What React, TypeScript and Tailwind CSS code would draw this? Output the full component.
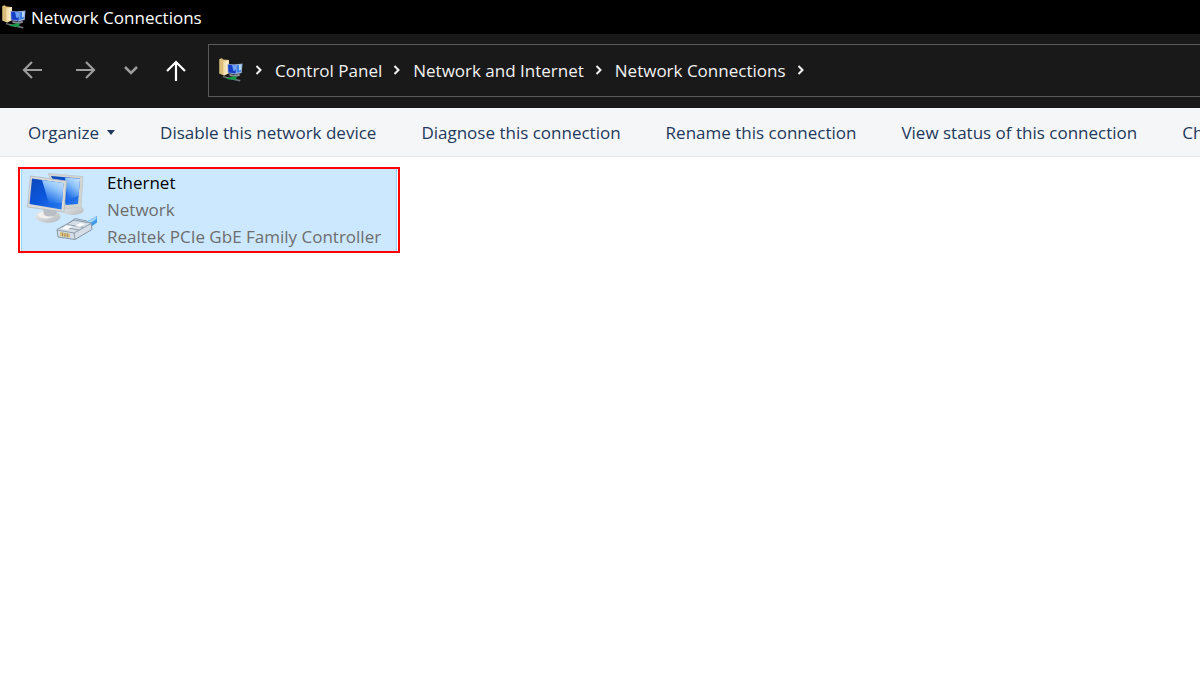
const crumbs = ['Control Panel', 'Network and Internet', 'Network Connections']

const commands = [
    'Disable this network device',
    'Diagnose this connection',
    'Rename this connection',
    'View status of this connection',
    'Change settings of this connection',
]

const FolderNetworkIcon = () => {
    return (
        <svg width="24" height="24" viewBox="0 0 24 24" className="shrink-0" aria-hidden="true">
            <path d="M.5 1 3 .3l1 1.2L10 2v13l-4.500 2.500L.5 15.500z" fill="#e2c67e" />
            <path d="M.5 1 4 2.500v14.500L.5 15.500z" fill="#d9bd7a" />
            <path d="M4.500 3.500 10 2v13l-5.500 2.500z" fill="#f3e3b4" />
            <path d="M8 3v12" stroke="#fff4d2" strokeWidth="1.200" />
            <path d="m16 6.500 7.500-1-.8 9.500-6.700 1.500z" fill="#9fb4d6" />
            <path d="m16.500 7.500 6-.8-.6 7-5.400 1.200z" fill="#3d7fe4" />
            <path d="m20 7 2.500-.3-.4 5L20 12.500z" fill="#b5d6fb" />
            <path d="m8.500 6 9.500.5-.8 10L8.800 15.200z" fill="#8fa9dc" />
            <path d="m9.200 6.800 8 .5-.6 8.200-7.200-1.100z" fill="#173fc6" />
            <path d="m13 7 4.200.3-.4 5-2.300.7z" fill="#6ea4f4" />
            <path d="m10.500 16 5.500.9 4.500-1.200.5 2-4.500 1.300-6-1z" fill="#8b9099" />
            <path d="m4 18 8 1.800 9.500 2.200-.6 1.600-9-2.200-8-2.100z" fill="#6f767d" />
            <path d="m7.500 20.300 9-2.300 1.300 1.500L16.500 22l-8-.7z" fill="#149a47" />
        </svg>
    )
}

const EthernetIcon = () => {
    return (
        <svg width="72" height="72" viewBox="0 0 72 72" className="shrink-0" aria-hidden="true">
            <defs>
                <linearGradient id="screen" x1="0" y1="0" x2="1" y2="1">
                    <stop offset="0" stopColor="#0d47b8" />
                    <stop offset="0.5" stopColor="#0b56dd" />
                    <stop offset="1" stopColor="#2a7cee" />
                </linearGradient>
                <linearGradient id="glare" x1="1" y1="0" x2="0.500" y2="1">
                    <stop offset="0" stopColor="#d4ebff" />
                    <stop offset="0.450" stopColor="#8fc3fb" />
                    <stop offset="1" stopColor="#1f6fe8" />
                </linearGradient>
                <linearGradient id="stand" x1="0" y1="0" x2="1" y2="1">
                    <stop offset="0" stopColor="#efefec" />
                    <stop offset="1" stopColor="#b2b8be" />
                </linearGradient>
            </defs>
            <ellipse cx="46" cy="37" rx="11" ry="5" fill="url(#stand)" />
            <path d="m21 .5 35 3-2 30.500-16 2z" fill="#d3d3cf" stroke="#bfc6cc" strokeWidth=".8" />
            <path d="m24 3 29 2.500-2 25.500-12 1z" fill="url(#screen)" />
            <path d="m38 4.500 15 1.200-1.500 17L40 27z" fill="url(#glare)" />
            <ellipse cx="21" cy="43.500" rx="12.500" ry="6.500" fill="url(#stand)" />
            <ellipse cx="19" cy="42" rx="8" ry="3.500" fill="#f1f1ee" />
            <path d="m16 35 14 3-1 4q-6 3-12 0z" fill="#b9bfc5" />
            <path d="m3.500 3 36 5L37 39 .5 34z" fill="#dadad6" stroke="#b3b9bf" strokeWidth=".8" />
            <path d="m5 5.500 31.500 4.500L34.500 36.500 2.500 31z" fill="url(#screen)" />
            <path d="m15 7 21.500 3-1.500 20-13 .5z" fill="url(#glare)" />
            <path d="m57 50 13-7v6.500L61 56z" fill="#3f9be8" />
            <path d="m58 49.500 11.500-6v2.500l-9 6z" fill="#9dd4fa" />
            <path d="m30 56.500 17-9.500 17 3 1 6.500L48 66.500 31 64z" fill="#d5dee6" stroke="#8795a5" />
            <path d="m30 57 17 3 17-9.500M47 60l1 6M35 54l17 3M40 51.500l17 3M42 50l6-4.500 12 2.500" fill="none" stroke="#8f9cab" />
            <path d="m34 55.500 6-3.300 6 1-6 3.500zM48 53l5-3 5 1-5 3z" fill="#f6fafd" />
            <path d="m33 59 10 2v3.500L33 63z" fill="#d8bd7c" />
            <path d="M35.500 59.500v4M38 60v4M40.500 60.500v4" stroke="#9d8a58" strokeWidth=".8" />
        </svg>
    )
}

const Chevron = () => {
    return (
        <svg width="8" height="12" viewBox="0 0 8 12" fill="none" stroke="#f2f2f2" strokeWidth="2" className="shrink-0" aria-hidden="true">
            <path d="m1.500 2 4 4-4 4" />
        </svg>
    )
}

const App = () => {
    return (
        <div className="min-h-screen overflow-hidden bg-white font-['Open_Sans','Noto_Sans',sans-serif] text-[17px] leading-[27px]">
            <header className="flex h-[34px] items-center gap-[5px] bg-black pl-0.5 text-white">
                <FolderNetworkIcon />
                <h1>Network Connections</h1>
            </header>

            <nav className="flex h-[74px] items-center bg-[#191919] pb-0.5">
                <div className="flex w-[208px] shrink-0 items-center pl-[22px]">
                    <button type="button" aria-label="Back" className="mr-8">
                        <svg width="21" height="20" viewBox="0 0 21 20" fill="none" stroke="#9d9d9d" strokeWidth="2.200">
                            <path d="M20 10H2M10 2l-8 8 8 8" />
                        </svg>
                    </button>
                    <button type="button" aria-label="Forward" className="mr-7">
                        <svg width="21" height="20" viewBox="0 0 21 20" fill="none" stroke="#9d9d9d" strokeWidth="2.200">
                            <path d="M1 10h18M11 2l8 8-8 8" />
                        </svg>
                    </button>
                    <button type="button" aria-label="Recent locations" className="mr-7">
                        <svg width="14" height="10" viewBox="0 0 14 10" fill="none" stroke="#9d9d9d" strokeWidth="2.500">
                            <path d="m1 2 6 6 6-6" />
                        </svg>
                    </button>
                    <button type="button" aria-label="Up">
                        <svg width="20" height="22" viewBox="0 0 20 22" fill="none" stroke="#ffffff" strokeWidth="2.200">
                            <path d="M10 22V3M1 12l9-9 9 9" />
                        </svg>
                    </button>
                </div>
                <div className="flex h-[53px] min-w-0 flex-1 items-center overflow-hidden border border-r-0 border-[#5a5a5a] pl-2.5 whitespace-nowrap text-[#f2f2f2]">
                    <FolderNetworkIcon />
                    <ol className="flex items-center">
                        <li className="flex px-3"><Chevron /></li>
                        {crumbs.map((crumb) => (
                            <li key={crumb} className="flex items-center">
                                <a href="#">{crumb}</a>
                                <span className="pr-3 pl-[11px]"><Chevron /></span>
                            </li>
                        ))}
                    </ol>
                </div>
            </nav>

            <div className="flex h-[49px] items-center gap-[45px] overflow-hidden border-b border-[#e4e6e9] bg-[#f5f6f8] pl-7 whitespace-nowrap text-[#1e395b]">
                <button type="button" className="flex shrink-0 items-center gap-2">
                    Organize
                    <svg width="8" height="5" viewBox="0 0 8 5" fill="#1e395b" aria-hidden="true">
                        <path d="M0 0h8L4 5z" />
                    </svg>
                </button>
                {commands.map((command) => (
                    <button key={command} type="button" className="shrink-0">{command}</button>
                ))}
            </div>

            <main className="px-[18px] pt-2.5">
                <button type="button" className="flex w-[382px] border-2 border-[#ff0000] bg-white px-px text-left whitespace-nowrap">
                    <span className="flex flex-1 border-x border-[#99d1ff] bg-[#cce8ff] pb-px pl-[5px]">
                        <span className="pt-1"><EthernetIcon /></span>
                        <span className="flex flex-col pl-2 text-[#6d6d6d]">
                            <span className="text-black">Ethernet</span>
                            <span>Network</span>
                            <span>Realtek PCIe GbE Family Controller</span>
                        </span>
                    </span>
                </button>
            </main>
        </div>
    )
}

export default App
